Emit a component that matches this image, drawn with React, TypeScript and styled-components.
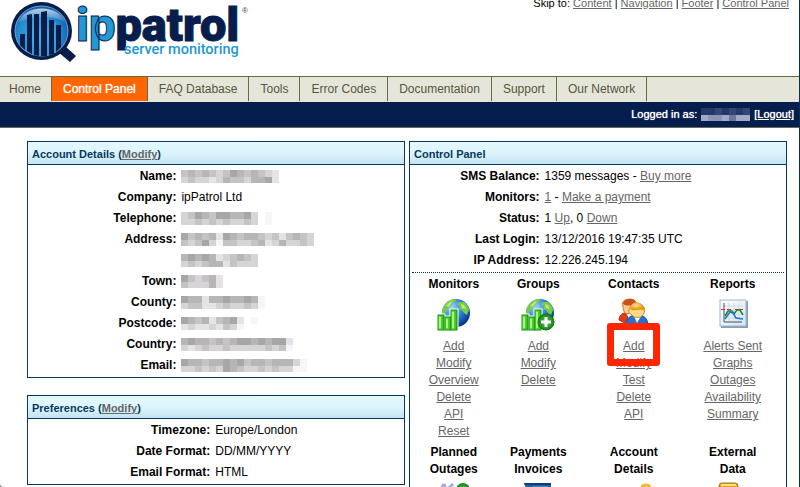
import React from "react";
import styled, { createGlobalStyle } from "styled-components";

const GlobalStyle = createGlobalStyle`
  html, body { margin: 0; padding: 0; background: #8d9097; }
  * { box-sizing: border-box; }
`;

const Page = styled.div`
  height: 100vh;
  overflow: hidden;
  display: flex;
  flex-direction: column;
  background: #fff;
  border-right: 1px solid #0a3050;
  border-bottom-left-radius: 4px;
  font: 12px/17px "Liberation Sans", Arial, sans-serif;
  color: #000;
`;

const Link = styled.a`
  color: #666;
  text-decoration: underline;
`;

const Header = styled.header`
  display: flex;
  flex: none;
  justify-content: space-between;
  height: 76px;
  padding: 0 10px;
`;

const SkipLinks = styled.nav`
  margin-top: -5px;
  font-size: 11px;
  line-height: 17px;
  white-space: nowrap;
`;

const NavBar = styled.nav`
  display: flex;
  flex: none;
  height: 26px;
  padding-bottom: 1px;
  background: #e5e6d9;
  border-top: 1px solid #656c42;
`;

const NavItem = styled.a<{ $active?: boolean }>`
  padding: 0 11px;
  line-height: 24px;
  white-space: nowrap;
  text-decoration: none;
  border-right: 1px solid #656c42;
  color: ${(p) => (p.$active ? "#fff" : "#56563c")};
  background: ${(p) => (p.$active ? "#ff6600" : "transparent")};
  text-shadow: ${(p) => (p.$active ? "0 0 1px #fff" : "none")};
  &:first-child { padding: 0 10px 0 9px; }
`;

const UserBar = styled.div`
  display: flex;
  flex: none;
  align-items: center;
  justify-content: flex-end;
  gap: 4px;
  height: 26px;
  padding: 0 5px;
  background: #061e4d;
  border-bottom: 1px solid #656c5a;
  font-size: 11px;
  color: #fff;
  text-shadow: 0 0 1px #fff;
`;

const Logout = styled.a`
  color: #fff;
`;

const Columns = styled.main`
  flex: 1;
  display: grid;
  grid-template-columns: 1fr 1fr;
  gap: 4px;
  padding: 13px 12px 0 27px;
`;

const Stack = styled.div`
  display: flex;
  flex-direction: column;
  gap: 17px;
`;

const Panel = styled.section`
  border: 1px solid #063a5c;
  padding-bottom: 2px;
`;

const PanelTitle = styled.h2`
  margin: 0;
  height: 23px;
  padding: 2px 4px 0;
  border-bottom: 1px solid #063a5c;
  background: linear-gradient(#e2f8ff 0%, #ddf5fe 50%, #c3e3f2 100%);
  color: #063a5c;
  font-size: 11px;
  line-height: 21px;
`;

const Details = styled.table<{ $label: number }>`
  width: 100%;
  table-layout: fixed;
  border-collapse: collapse;
  th, td { height: 21px; padding: 2px 2px 0 3px; line-height: 19px; }
  th { width: ${(p) => p.$label}%; text-align: right; }
`;

const Actions = styled.div`
  display: grid;
  grid-template-columns: 84fr 86fr 106fr 93fr;
  row-gap: 4px;
  margin: 2px 2px 0;
  padding: 3px 5px 0 0;
  border-top: 1px dotted #063a5c;
`;

const Group = styled.div`
  display: flex;
  flex-direction: column;
  align-items: center;
  text-align: center;
`;

const GroupTitle = styled.h3`
  margin: 0 0 4px;
  font-size: 12px;
  line-height: 17px;
  white-space: pre-line;
`;

const Icon = styled.svg`
  width: 34px;
  height: 34px;
  margin-bottom: 7px;
`;

const Marked = styled.span`
  position: relative;
  &::after {
    content: "";
    position: absolute;
    inset: -15px -16px -11px -16px;
    border: 7px solid #ff2600;
    border-radius: 3px;
    pointer-events: none;
  }
`;

const MosaicSvg = styled.svg`
  display: block;
  height: 13px;
`;

const shades: Record<string, string> = {
  a: "#a8a7a8", b: "#b7b5b6", c: "#c6c3c6", d: "#d6d4d7", e: "#e5e3e8", f: "#f6f6fa",
  m: "#8d93b4", n: "#a3a8c3", o: "#6c769b", p: "#35457a", q: "#24386b",
};

function Mosaic({ rows }: { rows: [string, string] }) {
  const width = Math.max(rows[0].length, rows[1].length) * 7;
  return (
    <MosaicSvg width={width} viewBox={`0 0 ${width} 13`} shapeRendering="crispEdges" role="img" aria-label="Hidden value">
      {rows.map((row, y) =>
        [...row].map((c, x) =>
          shades[c] ? <rect key={`${y}-${x}`} x={x * 7} y={y * 7} width="7" height={y ? 6 : 7} fill={shades[c]} /> : null
        )
      )}
    </MosaicSvg>
  );
}

function Logo() {
  return (
    <svg width="244" height="66" viewBox="10 0 244 66" role="img" aria-label="ippatrol server monitoring">
      <defs>
        <radialGradient id="lens" cx="45%" cy="60%" r="62%">
          <stop offset="0" stopColor="#43b5e9" />
          <stop offset=".65" stopColor="#238ccf" />
          <stop offset="1" stopColor="#1259a4" />
        </radialGradient>
        <linearGradient id="glare" x1="0" y1="0" x2="0" y2="1">
          <stop offset="0" stopColor="#fff" stopOpacity=".7" />
          <stop offset="1" stopColor="#fff" stopOpacity="0" />
        </linearGradient>
      </defs>
      <path d="M60 48 L65 46 L76 56 L70 62 L58 52Z" fill="#071d4c" />
      <ellipse cx="41.500" cy="31" rx="30.500" ry="29" fill="#071d4c" />
      <ellipse cx="41.500" cy="31" rx="27" ry="25.500" fill="#6d9fc9" />
      <ellipse cx="41.500" cy="31" rx="26" ry="24.500" fill="url(#lens)" />
      <path d="M18 24 C22 4 60 3 65 23 C55 15 30 15 18 24Z" fill="url(#glare)" />
      <path d="M20 34h5v16l-5-5z M27 15l5-1v40l-5-3z M34 14h5v42l-5-1z M41 12l6-1v45h-6z M49 20h5v34l-5 1z M56 25h5v22l-5 5z" fill="#071d4c" />
      <path d="M33 15v40 M40 14v42 M48 14v42 M55 22v31" stroke="#45a9df" strokeWidth="1" />
      <text x="76" y="41" fontFamily="Roboto, sans-serif" fontWeight="900" fontSize="47" stroke="#071d4c" strokeWidth="1">
        <tspan fill="#2497d6">ip</tspan>
        <tspan fill="#071d4c">patrol</tspan>
      </text>
      <text x="124" y="54" fontFamily="Roboto, sans-serif" fontWeight="500" fontSize="14.500" fill="#2497d6">server monitoring</text>
      <text x="242" y="13" fontFamily="Liberation Sans, sans-serif" fontSize="8" fill="#30456e">®</text>
    </svg>
  );
}

function Globe() {
  return (
    <>
      <circle cx="19" cy="16" r="14" fill="url(#sea)" />
      <path d="M7 9 C10 4 14 2 18 2 L19 4 L15 6 L14 9 L11 11 L9 15 L5 18 C5 14 5 12 7 9Z M22 5 L27 5 C30 7 32 10 32 13 L30 18 L27 16 L25 13 L22 12 L23 9 L20 7Z" fill="#78cc48" />
      <path d="M9 9 L13 5 L16 4 L12 10Z M24 7 L27 8 L29 12 L25 11Z" fill="#c1e779" />
    </>
  );
}

function Bars() {
  return (
    <g fill="url(#bar)" stroke="#179119" strokeWidth="1">
      <path d="M1 18h6v15H1z M8 20h6v13H8z M14 13h6v20h-6z" stroke="#fff" strokeWidth="3" />
      <rect x="1" y="18" width="6" height="15" />
      <rect x="8" y="20" width="6" height="13" />
      <rect x="14" y="13" width="6" height="20" />
      <path d="M3 20v11 M10 22v9 M16 15v16" stroke="#a8f779" strokeWidth="2" />
    </g>
  );
}

function IconDefs() {
  return (
    <svg width="0" height="0" aria-hidden="true">
      <defs>
        <radialGradient id="sea" cx="35%" cy="30%" r="75%">
          <stop offset="0" stopColor="#9fd5fb" />
          <stop offset=".5" stopColor="#2e83dc" />
          <stop offset="1" stopColor="#06307f" />
        </radialGradient>
        <linearGradient id="bar"><stop offset="0" stopColor="#7df04c" /><stop offset="1" stopColor="#2fb720" /></linearGradient>
        <radialGradient id="plus"><stop offset="0" stopColor="#62cf4b" /><stop offset="1" stopColor="#14831c" /></radialGradient>
        <radialGradient id="hair" cx="40%" cy="30%"><stop offset="0" stopColor="#ffe08a" /><stop offset="1" stopColor="#e39a1b" /></radialGradient>
        <linearGradient id="paper" x1="0" y1="0" x2="1" y2="1"><stop offset="0" stopColor="#fff" /><stop offset="1" stopColor="#d3e5f3" /></linearGradient>
      </defs>
    </svg>
  );
}

const icons: Record<string, React.ReactNode> = {
  monitors: (<><Globe /><Bars /></>),
  groups: (
    <>
      <Globe /><Bars />
      <circle cx="25" cy="25" r="8" fill="url(#plus)" stroke="#13761b" />
      <path d="M25 20v10 M20 25h10" stroke="#fff" strokeWidth="3" />
    </>
  ),
  contacts: (
    <>
      <path d="M2 23 C2 19 5 16 8 16 L11 20 L8 26Z" fill="#e23c20" stroke="#a62a18" />
      <path d="M6 9 C4 4 9 2 13 2 C18 2 20 6 18 10 L11 17 C7 16 6 13 6 9Z" fill="#f9cc8c" stroke="#c8761f" />
      <path d="M6 7 C6 3 10 2 14 2 C18 2 20 5 18 7 C14 9 9 9 6 7Z" fill="#c7521d" />
      <path d="M9 27 C10 21 13 18 20 18 C27 18 30 21 31 27Z" fill="#2373d2" stroke="#164d9c" />
      <path d="M17 19 L20 26 L24 19Z" fill="#fff" />
      <path d="M14 9 C16 5 22 5 25 8 C29 11 28 16 25 19 C21 22 16 20 14 17 C11 17 11 12 14 9Z" fill="#ffd984" stroke="#d58d1d" />
      <path d="M14 9 C16 5 22 5 25 8 C28 10 28 13 27 14 C23 11 18 15 13 12Z" fill="url(#hair)" />
    </>
  ),
  reports: (
    <>
      <rect x="5" y="4" width="27" height="27" fill="#879eb4" />
      <rect x="4" y="3" width="26" height="26" fill="url(#paper)" stroke="#9ab8d0" />
      <path d="M13 6v18 M18 6v18 M23 6v18 M8 9h19 M8 17h19 M8 21h19" stroke="#d4dbe2" strokeWidth="1" />
      <path d="M8 6v19h18" fill="none" stroke="#454f5d" />
      <path d="M5 12.500h4 M11 12.500h4 M19 12.500h8" stroke="#ee2525" />
      <path d="M9 19 L12 14 L16 14 L18 17 L21 13 L24 13 L27 18" fill="none" stroke="#188432" strokeWidth="1.500" />
      <path d="M9 22 L14 15 L17 16 L20 21 L27 22" fill="none" stroke="#2473d5" strokeWidth="1.500" />
    </>
  ),
  outages: (
    <>
      <path d="M3 9 L7 2 M10 8 L16 2 M7 2 L9 8" stroke="#aaa6d9" strokeWidth="3" fill="none" />
      <circle cx="26" cy="8" r="7" fill="url(#plus)" />
    </>
  ),
  payments: (<><path d="M3 1h27v24H12z" fill="#1c61a5" /><path d="M3 1h27v2H4z" fill="#123c76" /><path d="M12 5h15" stroke="#6ca9da" /></>),
  account: (<path d="M25 9 V6 Q25 3 29 3 Q33 3 33 7 V12" fill="none" stroke="#f2b82f" strokeWidth="3" />),
  external: (<><rect x="3" y="1" width="19" height="18" rx="3" fill="#dfa622" stroke="#a97510" /><path d="M5 3h15" stroke="#ffe282" strokeWidth="2" /></>),
};

const groups = [
  { title: "Monitors", icon: "monitors", links: ["Add", "Modify", "Overview", "Delete", "API", "Reset"] },
  { title: "Groups", icon: "groups", links: ["Add", "Modify", "Delete"] },
  { title: "Contacts", icon: "contacts", links: ["Add", "Modify", "Test", "Delete", "API"], marked: "Add" },
  { title: "Reports", icon: "reports", links: ["Alerts Sent", "Graphs", "Outages", "Availability", "Summary"] },
  { title: "Planned\nOutages", icon: "outages", links: [] },
  { title: "Payments\nInvoices", icon: "payments", links: [] },
  { title: "Account\nDetails", icon: "account", links: [] },
  { title: "External\nData", icon: "external", links: [] },
];

const navItems = ["Home", "Control Panel", "FAQ Database", "Tools", "Error Codes", "Documentation", "Support", "Our Network"];
const skipItems = ["Content", "Navigation", "Footer", "Control Panel"];

type Row = [string, React.ReactNode];

const account: Row[] = [
  ["Name:", <Mosaic rows={["cbcbcdcabcbcde", "dcddedbccdbbae"]} />],
  ["Company:", "ipPatrol Ltd"],
  ["Telephone:", <Mosaic rows={["dcabcaabbad f", "ddcdcdcddcd f"]} />],
  ["Address:", <Mosaic rows={["acbcbeabcbbcdcecbcd", "cdcadfccddcbedbddcd"]} />],
  ["", <Mosaic rows={["bababedcbcd", "dcdcbbecddd"]} />],
  ["Town:", <Mosaic rows={["acdcbe", "cdddbe"]} />],
  ["County:", <Mosaic rows={["abbebbabbabf", "dcceedcddcdf"]} />],
  ["Postcode:", <Mosaic rows={["abcbecbae f", "edeedecdf  "]} />],
  ["Country:", <Mosaic rows={["babbcbcbaababaae", "dedcddcdddddcdcf"]} />],
  ["Email:", <Mosaic rows={["abbcbbabacbbcbbbdf", "ddcdcdabcddcdcddff"]} />],
];

const preferences: Row[] = [
  ["Timezone:", "Europe/London"],
  ["Date Format:", "DD/MM/YYYY"],
  ["Email Format:", "HTML"],
];

const status: Row[] = [
  ["SMS Balance:", <>1359 messages - <Link href="#buy">Buy more</Link></>],
  ["Monitors:", <><Link href="#monitors">1</Link> - <Link href="#payment">Make a payment</Link></>],
  ["Status:", <>1 <Link href="#up">Up</Link>, 0 <Link href="#down">Down</Link></>],
  ["Last Login:", "13/12/2016 19:47:35 UTC"],
  ["IP Address:", "12.226.245.194"],
];

function DetailTable({ rows, label }: { rows: Row[]; label: number }) {
  return (
    <Details $label={label}>
      <tbody>
        {rows.map(([name, value], i) => (
          <tr key={i}>
            <th scope="row">{name}</th>
            <td>{value}</td>
          </tr>
        ))}
      </tbody>
    </Details>
  );
}

export default function App() {
  return (
    <>
      <GlobalStyle />
      <Page>
        <Header>
          <Logo />
          <SkipLinks>
            Skip to:{" "}
            {skipItems.map((s, i) => (
              <React.Fragment key={s}>
                {i > 0 && " | "}
                <Link href={`#${s}`}>{s}</Link>
              </React.Fragment>
            ))}
          </SkipLinks>
        </Header>
        <NavBar>
          {navItems.map((n) => (
            <NavItem key={n} href={`#${n}`} $active={n === "Control Panel"}>{n}</NavItem>
          ))}
        </NavBar>
        <UserBar>
          Logged in as: <Mosaic rows={["qqpqpqp", "nmmnonn"]} />
          <Logout href="#logout">[Logout]</Logout>
        </UserBar>
        <Columns>
          <Stack>
            <Panel>
              <PanelTitle>Account Details (<Link href="#account">Modify</Link>)</PanelTitle>
              <DetailTable rows={account} label={40} />
            </Panel>
            <Panel>
              <PanelTitle>Preferences (<Link href="#preferences">Modify</Link>)</PanelTitle>
              <DetailTable rows={preferences} label={49} />
            </Panel>
          </Stack>
          <Panel>
            <PanelTitle>Control Panel</PanelTitle>
            <DetailTable rows={status} label={35} />
            <Actions>
              {groups.map((g) => (
                <Group key={g.title}>
                  <GroupTitle>{g.title}</GroupTitle>
                  <Icon viewBox="0 0 34 34" aria-hidden="true">{icons[g.icon]}</Icon>
                  {g.links.map((l) =>
                    l === g.marked ? (
                      <Marked key={l}><Link href={`#${g.icon}-${l}`}>{l}</Link></Marked>
                    ) : (
                      <Link key={l} href={`#${g.icon}-${l}`}>{l}</Link>
                    )
                  )}
                </Group>
              ))}
            </Actions>
          </Panel>
        </Columns>
      </Page>
      <IconDefs />
    </>
  );
}
